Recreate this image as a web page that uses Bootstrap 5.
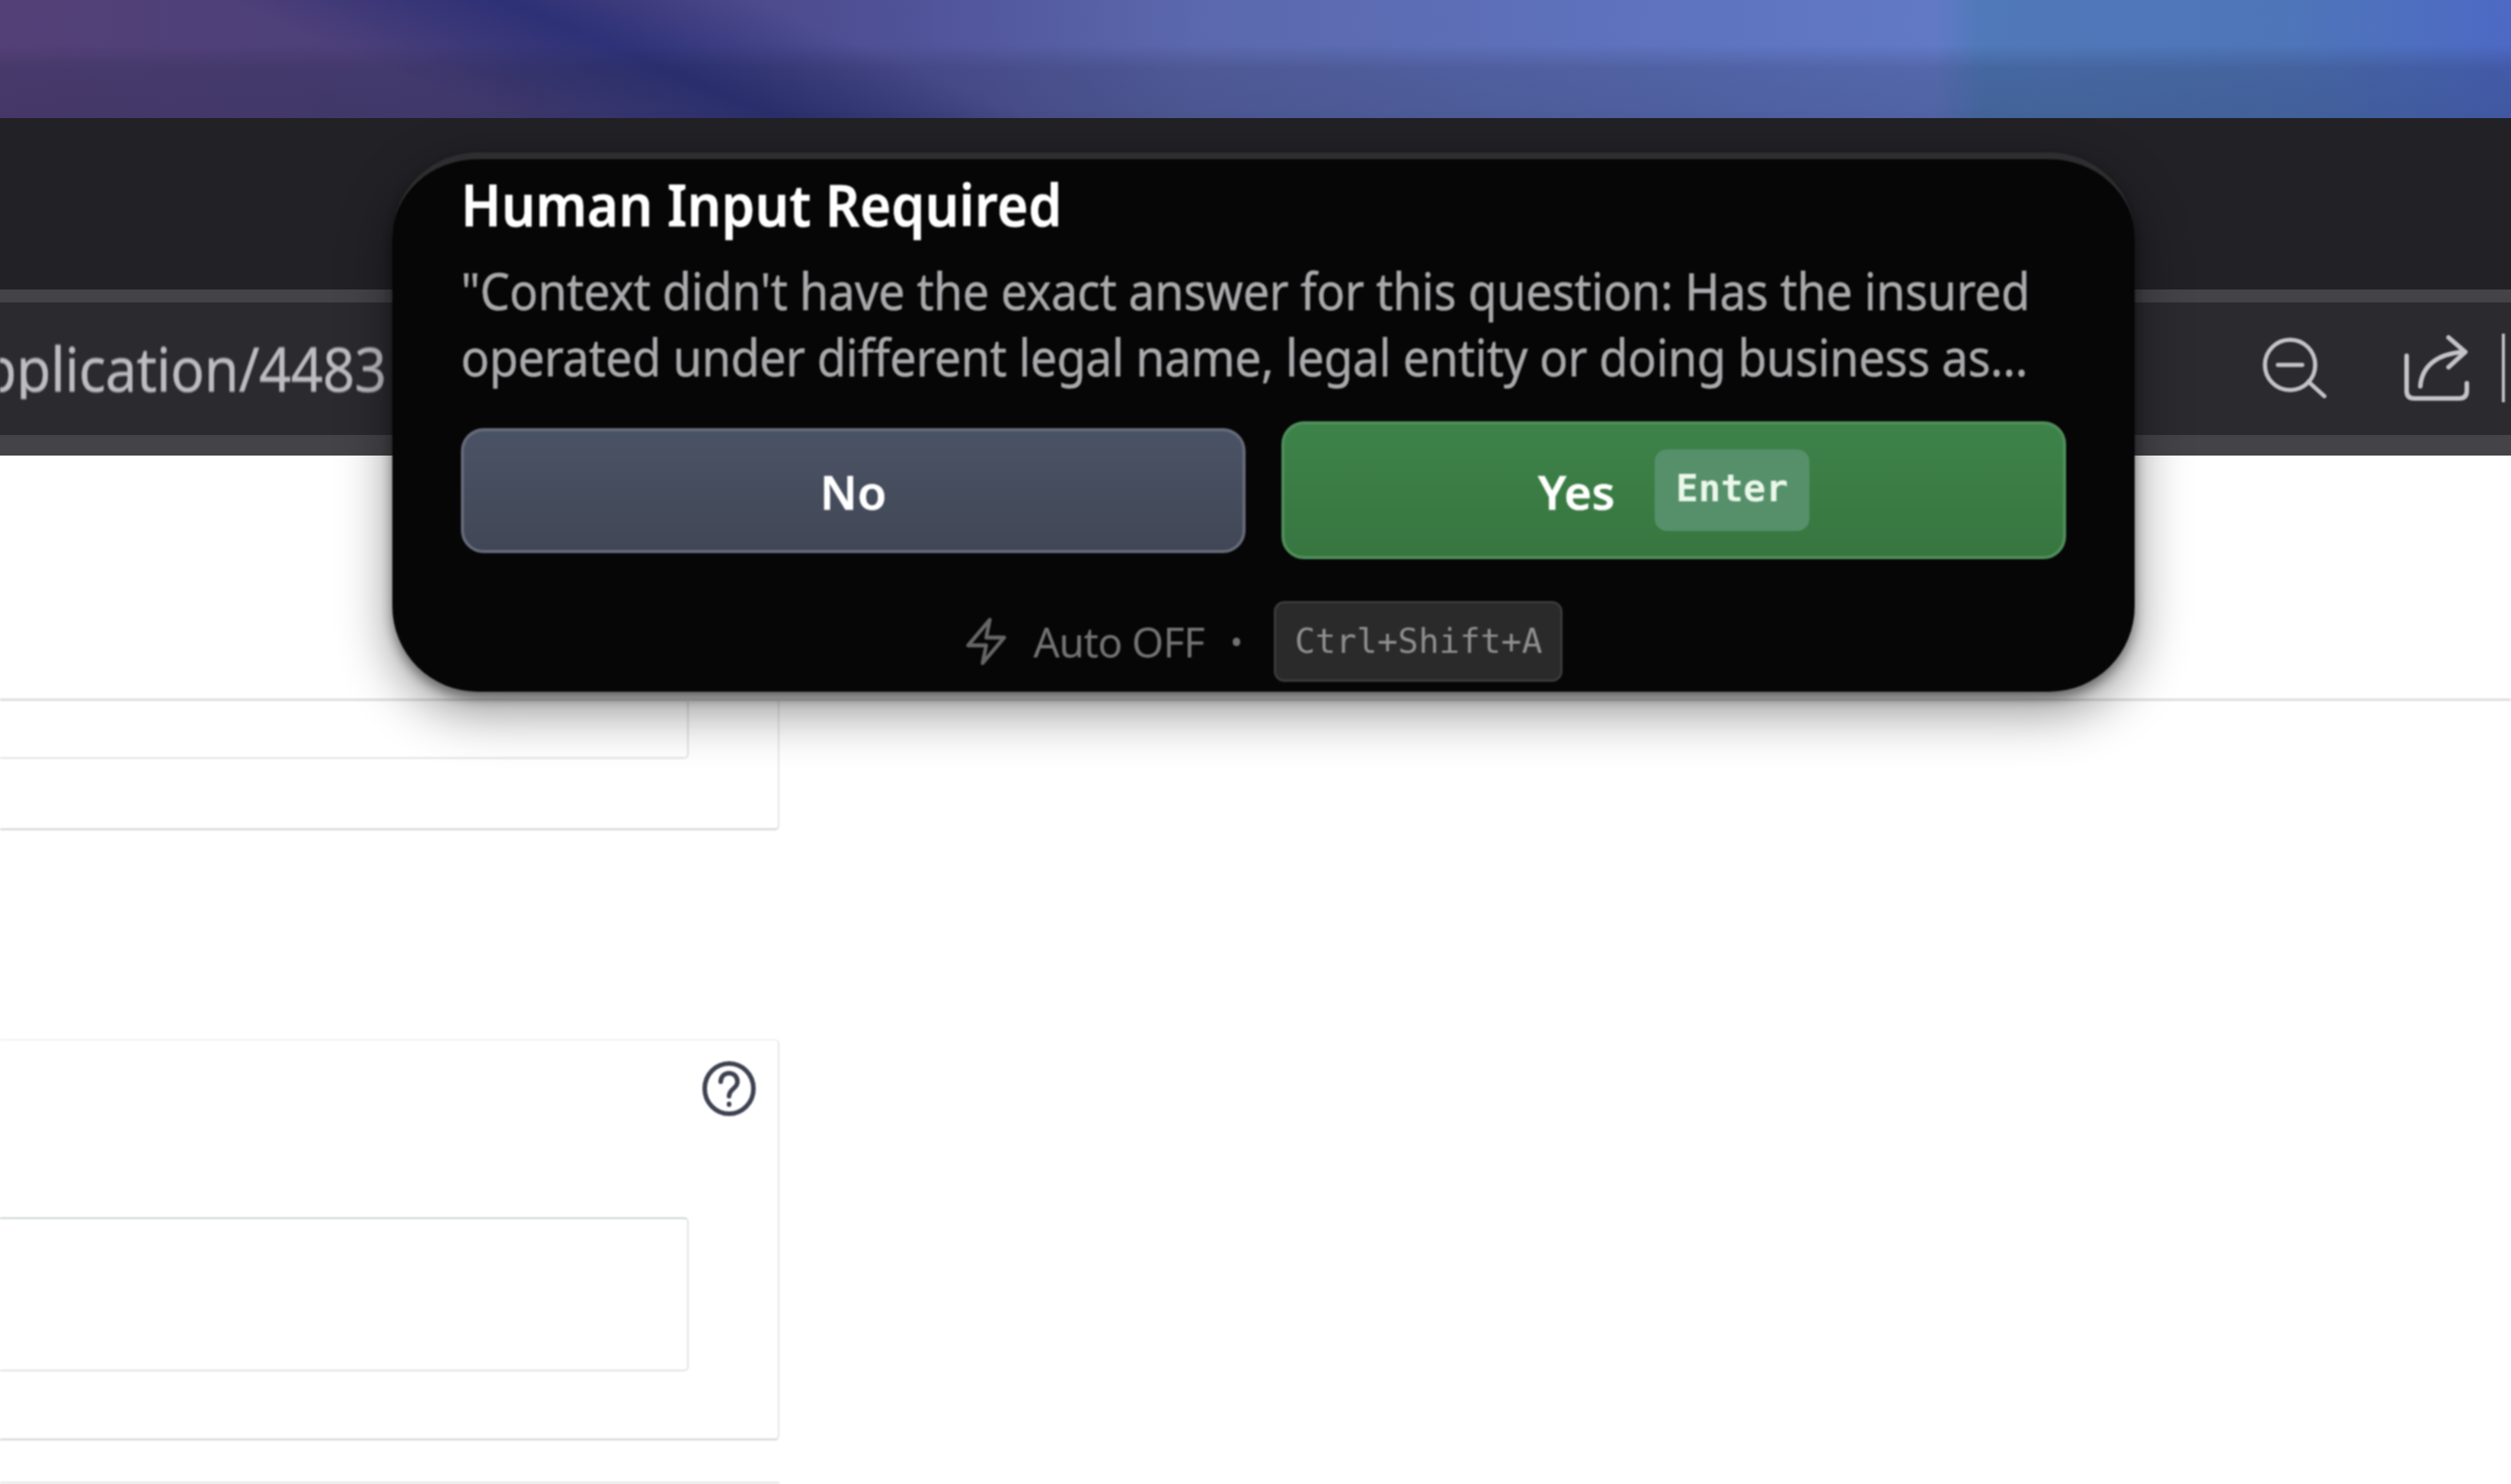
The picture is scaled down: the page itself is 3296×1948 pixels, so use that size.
<!doctype html>
<html lang="en">
<head>
<meta charset="utf-8">
<title>Human Input Required</title>
<link rel="stylesheet" href="https://cdn.jsdelivr.net/npm/bootstrap@5.3.0/dist/css/bootstrap.min.css">
<style>
html,body{margin:0;height:1948px;overflow:hidden;background:#fff}
.stage{position:relative;width:3296px;height:1948px;overflow:hidden;font-family:"Noto Sans","Open Sans",sans-serif}
.dialog,.addr-text,.tools,.panel,.rule,.tail{filter:blur(1.3px)}
.sky{height:155px;background:
 linear-gradient(180deg,rgba(0,0,0,0) 0,rgba(0,0,0,0) 38%,rgba(25,30,55,.2) 58%,rgba(25,30,55,.24) 100%),
 linear-gradient(23deg,rgba(30,40,115,0) 18%,rgba(30,40,115,.65) 28%,rgba(30,40,115,0) 37%),
 linear-gradient(90deg,#534077 0,#4a407b 700px,#4f5096 1150px,#5b68ad 1576px,#5f75c2 2312px,#6279c6 2540px,#5079b9 2600px,#4f75b9 3000px,#4d69c4 3296px)}
.topbar{height:225px;background:#222126}
.addr{height:218px;background:#2b2a2f;border-top:17px solid #444348;border-bottom:27px solid #444348}
.addr-text{color:#bcbcc1;font-size:74px;line-height:1;width:507px;overflow:hidden;white-space:nowrap;direction:rtl;text-align:left;letter-spacing:-.6px;transform:scaleY(1.08);-webkit-text-stroke:.4px #bcbcc1}
.tools{gap:100px;padding-right:8px}
.sheet{height:1351px;background:#fff;padding-top:320px}
.rule{height:3px;background:#dcdcde;position:absolute;left:0;right:0;top:917px}
.panel{width:1023px;background:#fff;border:2px solid #e4e5e7;border-left:0;border-radius:0 6px 6px 0;box-sizing:border-box}
.panel-a{height:172px;margin-top:0;border-top:0;padding-top:0;border-bottom:3px solid #dcdde0}
.panel-b{height:527px;margin-top:274px;padding:26px 28px 0 0;border-top-color:#f0f1f2;border-bottom:3px solid #dcdde0}
.box{width:904px;background:#fff;border:2px solid #dfe1e3;border-left:0;border-radius:0 6px 6px 0;box-sizing:border-box}
.box-a{height:78px;border-top:0}
.box-b{height:202px;margin-top:132px;border-top-color:#c9cfcf}
.tail{height:3px;width:1023px;background:#e8e8ea;margin-top:54px}
.help{width:72px;height:74px;display:block;margin-left:auto}
.dialog{position:absolute;left:515px;top:200px;width:2287px;height:708px;background:#060607;border-top:9px solid #2e2e30;border-radius:112px;box-shadow:0 8px 16px rgba(0,0,0,.42),0 24px 70px rgba(0,0,0,.45);padding:21px 90px 0;color:#fff}
.ttl{font-weight:600;font-size:70px;line-height:1;height:82px;white-space:nowrap;letter-spacing:.35px;transform:scaleY(1.08);transform-origin:left top;margin:0;-webkit-text-stroke:.6px #fff}
.msg{color:#a9a9ab;font-size:62px;line-height:87px;margin-top:26px;white-space:nowrap;letter-spacing:-.35px;-webkit-text-stroke:.5px #a9a9ab}
.msg span{display:block;transform:scaleY(1.1)}
.acts{gap:47px;margin-top:41px;align-items:center}
.pick{flex:1 1 0;border-radius:30px;font-size:62px;font-weight:600;color:#fff;padding:2px 0 0;display:flex;align-items:center;justify-content:center;line-height:1;-webkit-text-stroke:.5px #fff}
.pick:hover{color:#fff}
.pick-no{height:164px;background:linear-gradient(180deg,#4a5365,#414756);border:4px solid #666b79}
.pick-no:hover{background:#4a5365;border-color:#666b79}
.pick-yes{height:181px;background:linear-gradient(180deg,#3d8349,#387640);border:4px solid #4f8f5a;gap:52px}
.pick-yes:hover{background:#3d8349;border-color:#4f8f5a}
.key-enter{font-family:"DejaVu Sans Mono",monospace;font-size:49px;font-weight:700;background:#56906a;color:#eaf7ea;border-radius:16px;padding:0 28px 4px;height:107px;display:flex;align-items:center;letter-spacing:0;margin-top:-2px;-webkit-text-stroke:0}
.foot{gap:34px;color:#737373;font-size:54px;margin-top:55px;height:106px;letter-spacing:-1px}
.dot-sep{font-size:44px;margin-right:8px}
.key-combo{font-family:"DejaVu Sans Mono",monospace;font-size:45px;letter-spacing:0;color:#8f8f8f;background:#2a2a2a;border:3px solid #3c3c3c;border-radius:14px;height:106px;padding:0 24px;display:flex;align-items:center}
</style>
</head>
<body>
<div class="stage">
  <div class="sky"></div>
  <div class="topbar"></div>
  <div class="addr d-flex align-items-center justify-content-between">
    <div class="addr-text"><bdi>Application/4483</bdi></div>
    <div class="tools d-flex align-items-center">
      <svg width="84" height="82" viewBox="0 0 84 82" fill="none" stroke="#c4c4c8" stroke-width="5.5" stroke-linecap="round"><ellipse cx="36" cy="36" rx="33" ry="33"/><path d="M20 36H52M60 58L81 77"/></svg>
      <svg width="134" height="92" viewBox="0 0 134 92" fill="none" stroke="#c4c4c8" stroke-width="6" stroke-linecap="round" stroke-linejoin="round"><path d="M5 29V75Q5 85 15 85H74Q84 85 84 75V65"/><path d="M23 69C25 42 46 26 80 24"/><path d="M60 5L82 24L60 44"/><path d="M133 0V90" stroke-linecap="butt"/></svg>
    </div>
  </div>
  <div class="sheet">
    <div class="panel panel-a"><div class="box box-a"></div></div>
    <div class="panel panel-b">
      <svg class="help" viewBox="0 0 72 74" fill="none" stroke="#3d4150" stroke-width="6" stroke-linecap="round"><ellipse cx="36" cy="37" rx="32" ry="33"/><path d="M25 28C25 13 47 13 47 28C47 37 36 37 36 47"/><path d="M36 57V58"/></svg>
      <div class="box box-b"></div>
    </div>
    <div class="tail"></div>
  </div>
  <div class="rule"></div>
  <div class="dialog">
    <h1 class="ttl">Human Input Required</h1>
    <div class="msg"><span>"Context didn't have the exact answer for this question: Has the insured</span><span>operated under different legal name, legal entity or doing business as...</span></div>
    <div class="acts d-flex">
      <button type="button" class="btn pick pick-no">No</button>
      <button type="button" class="btn pick pick-yes"><span>Yes</span><span class="key-enter">Enter</span></button>
    </div>
    <div class="foot d-flex align-items-center justify-content-center">
      <svg width="57" height="62" viewBox="0 0 24 24" fill="none" stroke="#666" stroke-width="2" stroke-linejoin="round" preserveAspectRatio="none"><path d="M14 1L2 14H12L10 23L22 10H12Z"/></svg>
      <span>Auto OFF</span><span class="dot-sep">•</span>
      <span class="key-combo">Ctrl+Shift+A</span>
    </div>
  </div>
</div>
<script src="https://cdn.jsdelivr.net/npm/bootstrap@5.3.0/dist/js/bootstrap.bundle.min.js"></script>
</body>
</html>
